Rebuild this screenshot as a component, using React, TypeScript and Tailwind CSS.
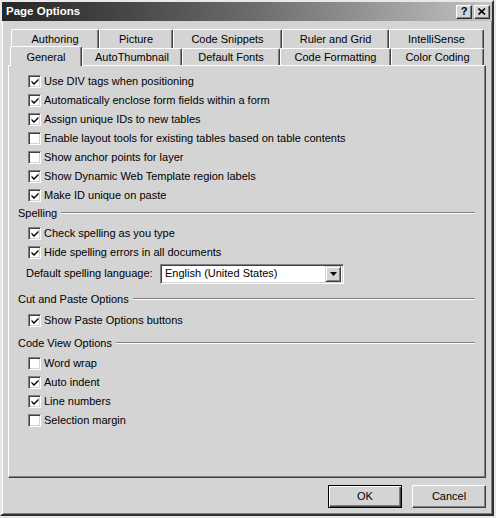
import React from "react";

const font = { fontFamily: '"Liberation Sans", Arial, sans-serif' };

function Check({ checked }: { checked: boolean }) {
  return (
    <div className="w-[13px] h-[13px] bg-white border border-t-[#808080] border-l-[#808080] border-b-white border-r-white shadow-[inset_1px_1px_0_#404040,inset_-1px_-1px_0_#d4d4d4] flex items-center justify-center shrink-0">
      {checked && (
        <svg width="9" height="9" viewBox="0 0 9 9" className="ml-[1px]">
          <path d="M0.5 3.5 L3 6 L7.5 1.5 L7.5 3.5 L3 8 L0.5 5.5 Z" fill="#000" />
        </svg>
      )}
    </div>
  );
}

function Row({ label, checked }: { label: string; checked: boolean }) {
  return (
    <div className="h-[19px] flex items-center pl-[19px] gap-[3px]">
      <Check checked={checked} />
      <span className="text-[11px] text-black leading-none">{label}</span>
    </div>
  );
}

function Header({ label, className = "" }: { label: string; className?: string }) {
  return (
    <div className={"h-[16px] flex items-center pl-[9px] pr-[10px] " + className}>
      <span className="text-[11px] text-black leading-none mr-[4px]">{label}</span>
      <div className="flex-1 flex flex-col">
        <div className="h-[1px] bg-[#808080]" />
        <div className="h-[1px] bg-white" />
      </div>
    </div>
  );
}

function BackTab({ label, w }: { label: string; w: string }) {
  return (
    <div
      className={
        w +
        " h-[19px] border-t border-l border-white border-r border-r-[#404040] shadow-[inset_-1px_0_0_#808080] rounded-tl-[2px] rounded-tr-[2px] flex items-center justify-center text-[11px] text-black bg-[#d4d4d4]"
      }
    >
      {label}
    </div>
  );
}

function FrontTab({ label, w }: { label: string; w: string }) {
  return (
    <div
      className={
        w +
        " h-[17px] border-t border-l border-white border-r border-r-[#404040] shadow-[inset_-1px_0_0_#808080] rounded-tl-[2px] rounded-tr-[2px] flex items-center justify-center text-[11px] text-black bg-[#d4d4d4] pt-[1px]"
      }
    >
      {label}
    </div>
  );
}

function Button({ label, def }: { label: string; def?: boolean }) {
  return (
    <div
      className={
        "w-[74px] h-[23px] flex items-center justify-center text-[11px] text-black bg-[#d4d4d4] " +
        (def
          ? "border border-black shadow-[inset_1px_1px_0_#fff,inset_-1px_-1px_0_#404040,inset_-2px_-2px_0_#808080]"
          : "border border-t-white border-l-white border-r-[#404040] border-b-[#404040] shadow-[inset_-1px_-1px_0_#808080]")
      }
    >
      {label}
    </div>
  );
}

export default function App() {
  return (
    <div className="w-[496px] h-[518px] bg-[#e6e6e6]" style={font}>
      <div className="w-[494px] h-[516px] bg-[#d4d4d4] border-2 border-t-[#e8e8e8] border-l-[#e8e8e8] border-r-[#303030] border-b-[#303030] shadow-[inset_1px_1px_0_#fff,inset_-1px_-1px_0_#808080] flex flex-col">
        {/* title bar */}
        <div className="h-[19px] bg-gradient-to-r from-[#262626] via-[#6a6a6a] to-[#c4c4c4] flex items-center pl-[4px] pr-[2px]">
          <span className="text-white font-bold text-[11.5px] leading-none flex-1">Page Options</span>
          <div className="flex gap-[2px]">
            <div className="w-[16px] h-[14px] bg-[#d4d4d4] border border-t-white border-l-white border-r-[#303030] border-b-[#303030] shadow-[inset_-1px_-1px_0_#808080] flex items-center justify-center text-[11px] font-bold text-black leading-none">
              ?
            </div>
            <div className="w-[16px] h-[14px] bg-[#d4d4d4] border border-t-white border-l-white border-r-[#303030] border-b-[#303030] shadow-[inset_-1px_-1px_0_#808080] flex items-center justify-center">
              <svg width="8" height="7" viewBox="0 0 8 7">
                <path d="M0.5 0.5 L7 6.5 M7 0.5 L0.5 6.5" stroke="#000" strokeWidth="1.6" />
              </svg>
            </div>
          </div>
        </div>

        <div className="flex-1 flex flex-col px-[6px] pt-[8px]">
          {/* back row */}
          <div className="flex pl-[3px]">
            <BackTab label="Authoring" w="w-[88px]" />
            <BackTab label="Picture" w="w-[74px]" />
            <BackTab label="Code Snippets" w="w-[109px]" />
            <BackTab label="Ruler and Grid" w="w-[107px]" />
            <BackTab label="IntelliSense" w="w-[95px]" />
          </div>
          {/* front row */}
          <div className="flex pl-[2px] h-[17px] items-start">
            <div className="w-[72px] h-[20px] -mt-[2px] relative z-10 border-t border-l border-white border-r border-r-[#404040] shadow-[inset_-1px_0_0_#808080] rounded-tl-[2px] rounded-tr-[2px] flex items-start justify-center pt-[2px] text-[11px] text-black bg-[#d4d4d4]">
              General
            </div>
            <FrontTab label="AutoThumbnail" w="w-[100px]" />
            <FrontTab label="Default Fonts" w="w-[98px]" />
            <FrontTab label="Code Formatting" w="w-[111px]" />
            <FrontTab label="Color Coding" w="w-[93px]" />
          </div>

          {/* panel */}
          <div className="h-[413px] border border-t-white border-l-white border-r-[#404040] border-b-[#404040] shadow-[inset_-1px_-1px_0_#808080] pt-[6px] flex flex-col">
            <Row label="Use DIV tags when positioning" checked />
            <Row label="Automatically enclose form fields within a form" checked />
            <Row label="Assign unique IDs to new tables" checked />
            <Row label="Enable layout tools for existing tables based on table contents" checked={false} />
            <Row label="Show anchor points for layer" checked={false} />
            <Row label="Show Dynamic Web Template region labels" checked />
            <Row label="Make ID unique on paste" checked />

            <Header label="Spelling" />
            <div className="h-[3px]" />
            <Row label="Check spelling as you type" checked />
            <Row label="Hide spelling errors in all documents" checked />
            <div className="h-[23px] flex items-center pl-[17px]">
              <span className="text-[11px] text-black w-[134px]">Default spelling language:</span>
              <div className="w-[184px] h-[20px] bg-white border border-t-[#808080] border-l-[#808080] border-b-white border-r-white shadow-[inset_1px_1px_0_#404040,inset_-1px_-1px_0_#d4d4d4] flex items-center pl-[4px] pr-[2px]">
                <span className="text-[11px] text-black flex-1">English (United States)</span>
                <div className="w-[16px] h-[16px] bg-[#d4d4d4] border border-t-[#d4d4d4] border-l-[#d4d4d4] border-r-[#404040] border-b-[#404040] shadow-[inset_1px_1px_0_#fff,inset_-1px_-1px_0_#808080] flex items-center justify-center">
                  <svg width="7" height="4" viewBox="0 0 7 4">
                    <path d="M0 0 H7 L3.5 4 Z" fill="#000" />
                  </svg>
                </div>
              </div>
            </div>

            <Header label="Cut and Paste Options" className="mt-[6px]" />
            <div className="h-[4px]" />
            <Row label="Show Paste Options buttons" checked />

            <Header label="Code View Options" className="mt-[5px]" />
            <div className="h-[3px]" />
            <Row label="Word wrap" checked={false} />
            <Row label="Auto indent" checked />
            <Row label="Line numbers" checked />
            <Row label="Selection margin" checked={false} />
          </div>

          {/* buttons */}
          <div className="flex justify-end gap-[10px] mt-[7px]">
            <Button label="OK" def />
            <Button label="Cancel" />
          </div>
        </div>
      </div>
    </div>
  );
}
